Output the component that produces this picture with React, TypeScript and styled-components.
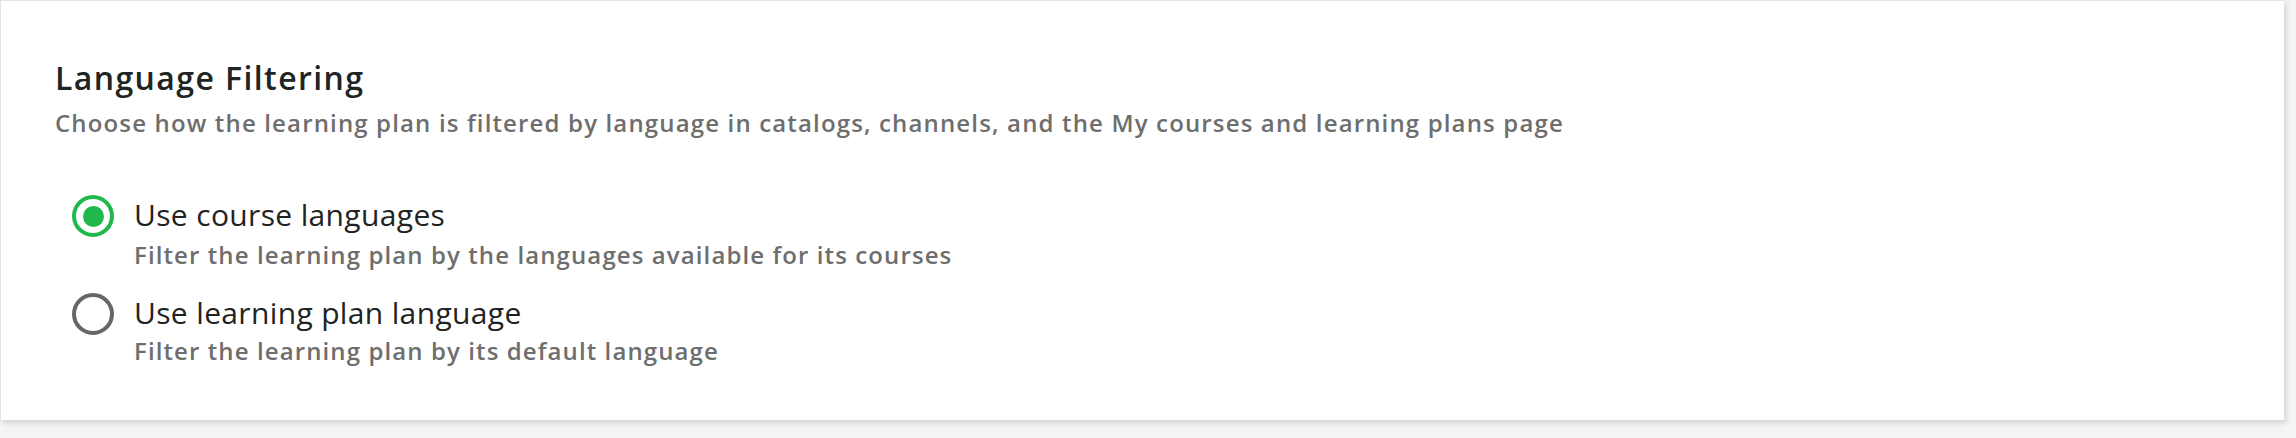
import styled, { createGlobalStyle } from 'styled-components';

const GlobalStyle = createGlobalStyle`
  html, body {
    margin: 0;
    padding: 0;
    background: #f4f4f4;
  }
  body {
    font-family: "Open Sans", "Noto Sans", sans-serif;
  }
`;

const Page = styled.div`
  padding: 0 12px 18px 0;
`;

const Card = styled.section`
  background: #fff;
  border-top: 1px solid #e3e3e3;
  border-left: 1px solid #e3e3e3;
  box-shadow: 2px 3px 6px rgba(0, 0, 0, 0.14);
  padding: 55px 54px 54px 54px;
`;

const Title = styled.h2`
  margin: 0;
  font-size: 32px;
  line-height: 44px;
  font-weight: 600;
  letter-spacing: 1.4px;
  color: #202422;
`;

const Subtitle = styled.p`
  margin: 7px 0 0;
  font-size: 24px;
  line-height: 32px;
  font-weight: 600;
  letter-spacing: 1.15px;
  color: #6e6e6e;
`;

const OptionList = styled.div`
  margin-top: 56px;
  padding-left: 17px;
  display: flex;
  flex-direction: column;
  gap: 23px;
`;

const OptionRow = styled.label`
  display: flex;
  align-items: flex-start;
  gap: 20px;
  cursor: pointer;
`;

const RadioCircle = styled.span<{ $checked: boolean }>`
  flex: none;
  box-sizing: border-box;
  width: 42px;
  height: 42px;
  border-radius: 50%;
  border: 4px solid ${(p) => (p.$checked ? '#20b84a' : '#666')};
  display: flex;
  align-items: center;
  justify-content: center;

  &::after {
    content: '';
    width: 21px;
    height: 21px;
    border-radius: 50%;
    background: ${(p) => (p.$checked ? '#20b84a' : 'transparent')};
  }
`;

const OptionText = styled.div`
  display: flex;
  flex-direction: column;
`;

const OptionLabel = styled.span`
  font-size: 30px;
  line-height: 40px;
  font-weight: 400;
  letter-spacing: 0.35px;
  color: #1f2321;
`;

const OptionHint = styled.span<{ $gap: number }>`
  margin-top: ${(p) => p.$gap}px;
  font-size: 24px;
  line-height: 30px;
  font-weight: 600;
  letter-spacing: 1.1px;
  color: #6e6e6e;
`;

const options = [
  {
    label: 'Use course languages',
    hint: 'Filter the learning plan by the languages available for its courses',
    checked: true,
    gap: 5,
  },
  {
    label: 'Use learning plan language',
    hint: 'Filter the learning plan by its default language',
    checked: false,
    gap: 3,
  },
];

function App() {
  return (
    <>
      <GlobalStyle />
      <Page>
        <Card>
          <Title>Language Filtering</Title>
          <Subtitle>
            Choose how the learning plan is filtered by language in catalogs, channels, and the My
            courses and learning plans page
          </Subtitle>
          <OptionList>
            {options.map((o) => (
              <OptionRow key={o.label}>
                <RadioCircle $checked={o.checked} />
                <OptionText>
                  <OptionLabel>{o.label}</OptionLabel>
                  <OptionHint $gap={o.gap}>{o.hint}</OptionHint>
                </OptionText>
              </OptionRow>
            ))}
          </OptionList>
        </Card>
      </Page>
    </>
  );
}

export default App;
